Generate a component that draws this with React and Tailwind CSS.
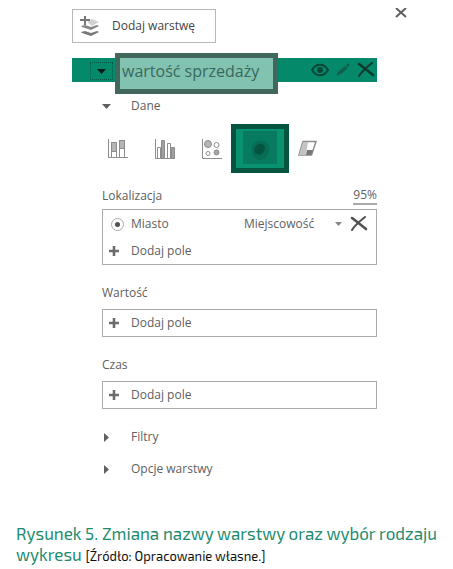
import { useState } from 'react';

const CHARTS = ['stacked', 'clustered', 'bubble', 'heat', 'region'];

const CHART_LABELS = {
  stacked: 'Skumulowany kolumnowy',
  clustered: 'Grupowany kolumnowy',
  bubble: 'Bąbelkowy',
  heat: 'Mapa cieplna',
  region: 'Region',
};

function LayersIcon() {
  return (
    <svg width="20" height="20" viewBox="0 0 20 20" fill="none">
      <path d="M7 6l5-3 7 3-7 4z" fill="#d2d2d2" />
      <path d="M5 0v9M0 4h10" stroke="#777" strokeWidth="2" />
      <path d="M1 10l4-1 6 2 6-2 2 1-8 4-9-3z" fill="#858585" />
      <path d="M1 16l4-1 6 2 6-2 2 1-8 4-9-3z" fill="#777" />
    </svg>
  );
}

function CrossIcon() {
  return (
    <svg width="18" height="16" viewBox="0 0 18 16" fill="none" stroke="currentColor" strokeLinecap="round">
      <path d="M2 2c4 3 9 7 14 11" strokeWidth="2.6" />
      <path d="M15 1C10 5 5 9 2 14" strokeWidth="2" />
    </svg>
  );
}

function PlusIcon() {
  return (
    <svg width="10" height="10" viewBox="0 0 10 10" stroke="#6c6c6c" strokeWidth="2.6">
      <path d="M5 0v10M0 5h10" />
    </svg>
  );
}

function Triangle({ open }) {
  return (
    <svg width="9" height="9" viewBox="0 0 9 9" fill="currentColor">
      {open ? <path d="M0 2h9L4.500 7z" /> : <path d="M2 0v9l5-4.500z" />}
    </svg>
  );
}

function ChartIcon({ type }) {
  if (type === 'heat') {
    return (
      <svg width="48" height="39" viewBox="0 0 48 39">
        <path d="M7 2h34v33H7z" fill="#087a60" />
        <path d="M18 14c5-4 14-3 15 4s-4 14-10 13-10-12-5-17z" fill="#076d55" />
        <path d="M20 17c3-4 9-2 9 2s-4 8-8 6-3-5-1-8z" fill="#055440" />
      </svg>
    );
  }
  return (
    <svg width="21" height="20" viewBox="0 0 21 20" fill="none" stroke="#8c8c8c">
      {type === 'stacked' && (
        <>
          <path d="M1.500 0v18.500H21" />
          <path d="M4.500 3.500h5v15h-5zM12.500 1.500h5v17h-5z" fill="#fff" />
          <path d="M4.500 3.500h5v9h-5zM12.500 1.500h5v8h-5z" fill="#b5b5b5" />
        </>
      )}
      {type === 'clustered' && (
        <>
          <path d="M1.500 0v19.500H21" />
          <path d="M3.500 8.500h3v11h-3zM13.500 4.500h3v15h-3z" fill="#fff" />
          <path d="M7.500 1.500h3v18h-3zM17.500 8.500h3v11h-3z" fill="#a0a0a0" />
        </>
      )}
      {type === 'bubble' && (
        <>
          <path d="M1.500 0v19.500H21" />
          <circle cx="7" cy="5" r="3.500" fill="#b5b5b5" />
          <circle cx="15.500" cy="6" r="2.500" />
          <circle cx="7" cy="14.500" r="2" />
          <circle cx="15.500" cy="13.500" r="2.500" fill="#a5a5a5" />
        </>
      )}
      {type === 'region' && (
        <>
          <path d="M6 2.500h13L14.500 16H2z" fill="#fff" strokeWidth="1.500" />
          <path d="M6 3h5L9 16H2z" fill="#c4c4c4" stroke="none" />
          <path d="M10 11h6l-2 5H9z" fill="#777" stroke="none" />
        </>
      )}
    </svg>
  );
}

function AddField() {
  return (
    <button type="button" className="flex h-[26px] w-full items-center gap-3 px-1.5 text-left">
      <PlusIcon />
      <span>Dodaj pole</span>
    </button>
  );
}

function Section({ title, open }) {
  return (
    <button type="button" aria-expanded={open} className="flex h-8 items-center gap-5 text-left">
      <Triangle open={open} />
      <span>{title}</span>
    </button>
  );
}

function App() {
  const [name, setName] = useState('wartość sprzedaży');
  const [chart, setChart] = useState('heat');

  return (
    <div className="bg-white font-['Open_Sans',sans-serif] text-xs text-[#606060]">
      <div className="pr-[76px] pl-[72px]">
        <div className="-mr-[30px] flex items-start justify-between pt-2">
          <button
            type="button"
            className="mt-px flex h-[34px] items-center gap-3 border border-[#b8b8b8] pr-5 pl-[7px] text-[#444]"
          >
            <LayersIcon />
            <span>Dodaj warstwę</span>
          </button>
          <button type="button" aria-label="Zamknij">
            <svg width="12" height="10" viewBox="0 0 12 10" fill="none" stroke="#606060" strokeWidth="2">
              <path d="M1 0l10 9M11 0L1 9" />
            </svg>
          </button>
        </div>

        <div className="mt-[15px] flex h-6 items-start bg-[#04896a]">
          <button
            type="button"
            aria-label="Zwiń warstwę"
            className="mt-1 mr-0.5 ml-[18px] flex h-[18px] w-[23px] shrink-0 items-center justify-center border border-dotted border-[#045a46] text-[#0a1c17]"
          >
            <Triangle open />
          </button>
          <input
            aria-label="Nazwa warstwy"
            value={name}
            onChange={(e) => setName(e.target.value)}
            className="-mt-[5px] h-[41px] w-[163px] border-[5px] border-[#42675d] bg-[#82c2b1] pb-1.5 pl-0.5 text-base text-[#39695b] outline-none"
          />
          <div className="ml-auto flex h-6 items-center gap-1.5 pr-0.5 text-[#12392e]">
            <button type="button" aria-label="Pokaż">
              <svg width="18" height="14" viewBox="0 0 18 14" fill="none" stroke="#064737" strokeWidth="2">
                <path d="M1 7c4-7 12-7 16 0-4 7-12 7-16 0z" />
                <circle cx="9" cy="7" r="2" fill="#064737" />
              </svg>
            </button>
            <button type="button" aria-label="Zmień nazwę">
              <svg width="16" height="14" viewBox="0 0 16 14" fill="#12604b">
                <path d="M1 13l2-4 7-6 3 2-7 6zM11 2l2-2 2 2-2 2z" />
              </svg>
            </button>
            <button type="button" aria-label="Usuń warstwę">
              <CrossIcon />
            </button>
          </div>
        </div>

        <div className="pl-[30px]">
          <div className="mt-2 flex">
            <Section title="Dane" open />
          </div>

          <div className="mt-0.5 flex items-center pl-[5px]">
            {CHARTS.map((type) => (
              <button
                key={type}
                type="button"
                aria-label={CHART_LABELS[type]}
                aria-pressed={chart === type}
                onClick={() => setChart(type)}
                className={
                  type === 'heat'
                    ? 'mr-2 -ml-[17px] border-[5px] border-[#055440] bg-[#099270]'
                    : 'mr-[26px]'
                }
              >
                <ChartIcon type={type} />
              </button>
            ))}
          </div>

          <div className="mt-3.5 flex items-end justify-between">
            <h2 className="pb-px">Lokalizacja</h2>
            <a href="#dokladnosc" className="border-b-2 border-[#aaa]">
              95%
            </a>
          </div>
          <div className="mt-1 border border-[#aaa]">
            <div className="flex h-7 items-center pr-2 pl-2">
              <label className="flex items-center gap-[7px]">
                <input
                  type="radio"
                  name="pole"
                  defaultChecked
                  className="size-[13px] appearance-none rounded-full border border-[#aaa] bg-[#505050] bg-clip-content p-[3px]"
                />
                Miasto
              </label>
              <div className="relative ml-auto flex items-center">
                <select aria-label="Typ pola" className="w-[98px] appearance-none bg-transparent">
                  <option>Miejscowość</option>
                </select>
                <svg width="7" height="4" viewBox="0 0 7 4" fill="#858585" className="pointer-events-none absolute right-0">
                  <path d="M0 0h7L3.500 4z" />
                </svg>
              </div>
              <button type="button" aria-label="Usuń pole" className="ml-2 text-[#505050]">
                <CrossIcon />
              </button>
            </div>
            <AddField />
          </div>

          <h2 className="mt-5 mb-2">Wartość</h2>
          <div className="border border-[#aaa]">
            <AddField />
          </div>

          <h2 className="mt-5 mb-2">Czas</h2>
          <div className="border border-[#aaa]">
            <AddField />
          </div>

          <div className="mt-3 flex flex-col items-start">
            <Section title="Filtry" />
            <Section title="Opcje warstwy" />
          </div>
        </div>
      </div>

      <p className="mt-[38px] pr-2 pl-4 font-['Exo_2',Roboto,sans-serif] text-[17px] leading-[21px] text-[#218b70]">
        <span>Rysunek 5. Zmiana nazwy warstwy oraz wybór rodzaju wykresu</span>{' '}
        <span className="text-[13px] text-[#111]">[Źródło: Opracowanie własne.]</span>
      </p>
    </div>
  );
}

export default App;
